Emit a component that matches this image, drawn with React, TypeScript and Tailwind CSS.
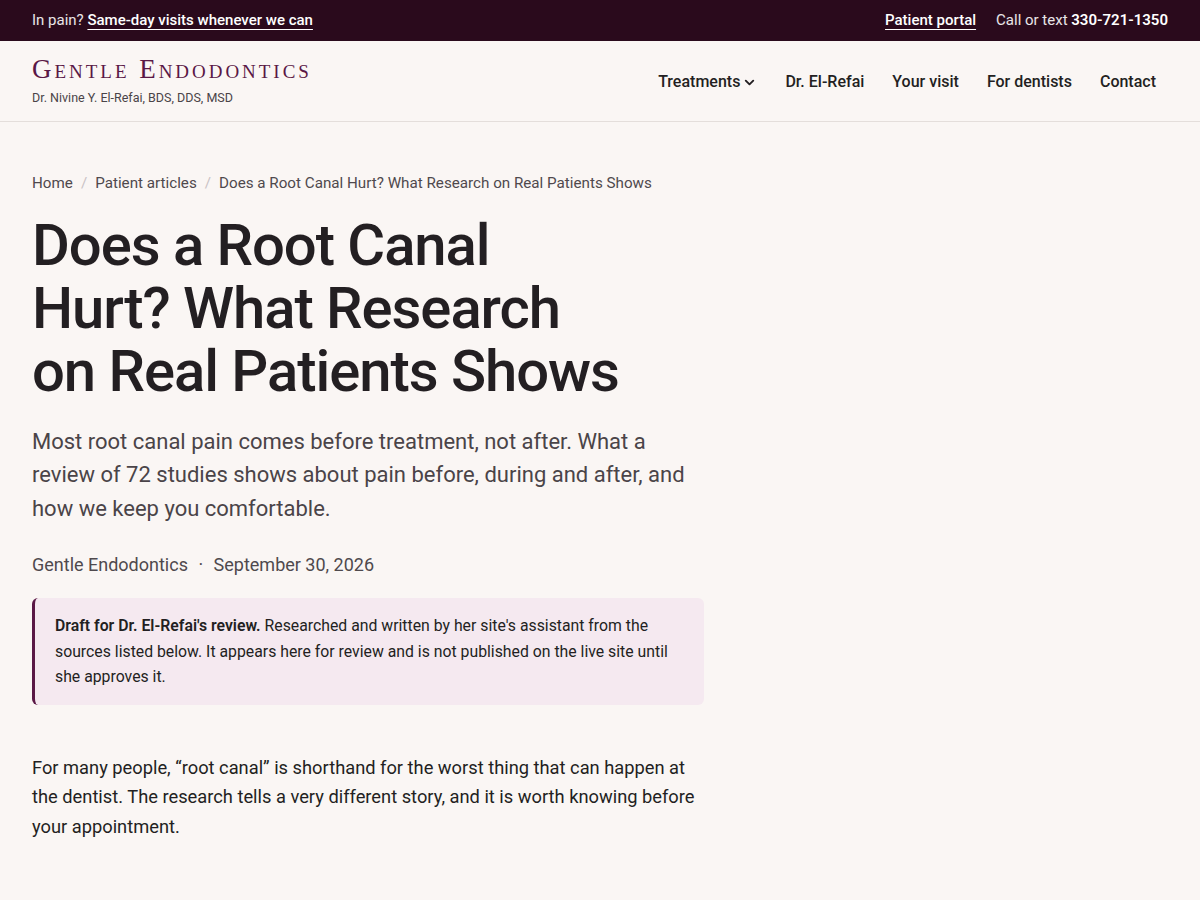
import { ChevronDown } from "lucide-react";

const font = { fontFamily: "Roboto, 'Noto Sans', sans-serif" };

export default function App() {
  const nav = ["Dr. El-Refai", "Your visit", "For dentists", "Contact"];

  return (
    <div className="min-h-screen bg-[#faf6f4] text-[#231f22]" style={font}>
      {/* top bar */}
      <div className="bg-[#2a0a1c] text-white">
        <div className="flex h-[41px] items-center justify-between px-8 text-[15px]">
          <p className="text-white/90">
            In pain?{" "}
            <a href="#" className="font-medium text-white underline underline-offset-4 decoration-1">
              Same-day visits whenever we can
            </a>
          </p>
          <div className="flex items-center gap-5">
            <a href="#" className="font-medium underline underline-offset-4 decoration-1">
              Patient portal
            </a>
            <span className="text-white/90">
              Call or text <span className="font-semibold text-white">330-721-1350</span>
            </span>
          </div>
        </div>
      </div>

      {/* header */}
      <header className="border-b border-[#e4dedb]">
        <div className="flex h-[80px] items-center justify-between px-8">
          <div className="pt-[2px]">
            <div
              className="text-[27px] leading-none tracking-[0.11em] text-[#5a1846]"
              style={{ fontFamily: "'Liberation Serif', 'DejaVu Serif', serif", fontVariant: "small-caps" }}
            >
              Gentle Endodontics
            </div>
            <div className="mt-[6px] text-[12.5px] text-[#4a4448]">Dr. Nivine Y. El-Refai, BDS, DDS, MSD</div>
          </div>
          <nav className="flex items-center pt-[2px] text-[16px] font-medium">
            <a href="#" className="flex items-center gap-0.5 px-3.5">
              Treatments
              <ChevronDown size={15} strokeWidth={3} />
            </a>
            {nav.map((item) => (
              <a key={item} href="#" className="px-3.5 last:pr-3">
                {item}
              </a>
            ))}
          </nav>
        </div>
      </header>

      {/* article */}
      <main className="px-8 pt-[50px]">
        <div className="max-w-[672px]">
          <nav className="flex items-center gap-2 text-[15.2px] text-[#4f494d]">
            <a href="#">Home</a>
            <span className="text-[#c9c2c5]">/</span>
            <a href="#">Patient articles</a>
            <span className="text-[#c9c2c5]">/</span>
            <span>Does a Root Canal Hurt? What Research on Real Patients Shows</span>
          </nav>

          <h1 className="mt-[19px] text-[58px] font-medium leading-[63px] tracking-[-0.018em] text-[#231f22]">
            Does a Root Canal
            <br />
            Hurt? What Research
            <br />
            on Real Patients Shows
          </h1>

          <p className="mt-[22px] text-[22px] leading-[33.5px] text-[#4a4448]">
            Most root canal pain comes before treatment, not after. What a review of 72 studies shows about pain
            before, during and after, and how we keep you comfortable.
          </p>

          <p className="mt-[26px] text-[18px] text-[#4f494d]">
            Gentle Endodontics <span className="mx-1.5">·</span> September 30, 2026
          </p>

          <div className="mt-[20px] rounded-md border-l-[3px] border-[#5a1846] bg-[#f5e9f0] px-5 py-[15px] text-[15.8px] leading-[25.5px]">
            <strong className="font-semibold">Draft for Dr. El-Refai's review.</strong> Researched and written by her
            site's assistant from the sources listed below. It appears here for review and is not published on the
            live site until she approves it.
          </div>

          <p className="mt-[48px] text-[18.3px] leading-[29.5px]">
            For many people, “root canal” is shorthand for the worst thing that can happen at the dentist. The
            research tells a very different story, and it is worth knowing before your appointment.
          </p>
        </div>
      </main>
    </div>
  );
}
